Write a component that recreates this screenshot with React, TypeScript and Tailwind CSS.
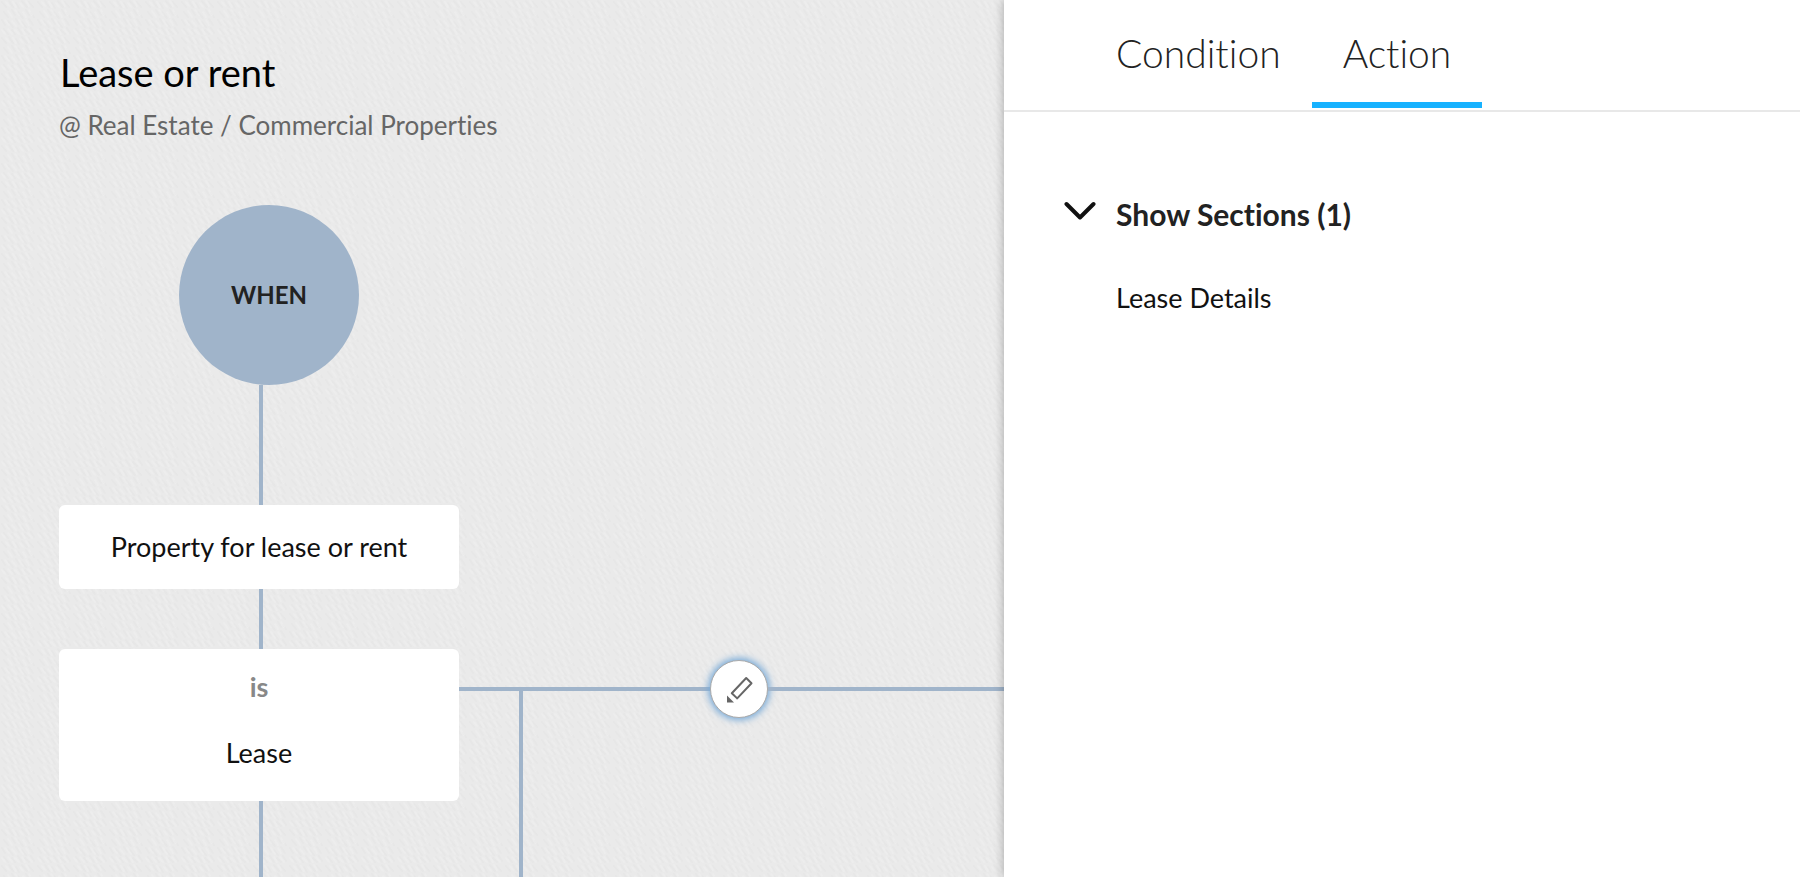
import { useState } from "react";

const TABS = ["Condition", "Action"] as const;
type Tab = (typeof TABS)[number];

const SECTIONS = ["Lease Details"];

function PencilIcon() {
  return (
    <svg width="28" height="28" viewBox="0 0 28 28" fill="none" aria-hidden="true">
      <path
        d="M6.8 18.2L21.2 3L26.5 8.2L12.2 23.4Z"
        stroke="#666"
        strokeWidth="2"
        strokeLinejoin="round"
      />
      <path d="M2 20.5L9 27.5H2Z" fill="#666" />
    </svg>
  );
}

function ChevronIcon({ open }: { open: boolean }) {
  return (
    <svg
      width="32"
      height="20"
      viewBox="0 0 32 20"
      fill="none"
      stroke="#111"
      strokeWidth="4"
      strokeLinecap="round"
      strokeLinejoin="round"
      className={open ? "mb-1.5" : "mb-1.5 -rotate-90"}
      aria-hidden="true"
    >
      <path d="M2.5 3L16 16.5L29.5 3" />
    </svg>
  );
}

// Soft diagonal weave behind the diagram, repeated every 36px
function CanvasTexture() {
  return (
    <svg className="absolute inset-0 w-full h-full" aria-hidden="true">
      <defs>
        <pattern id="weave" width="36" height="36" patternUnits="userSpaceOnUse">
          <g stroke="#e4e4e4" strokeWidth="2" strokeLinecap="round" opacity="0.5">
            <path d="M2 2l4 5M9 1l4 6M16 3l3 5M22 1l5 6M29 2l4 5" />
            <path d="M4 12l4 5M12 10l3 5M18 12l5 6M26 10l3 5M31 13l3 4" />
            <path d="M2 20l3 5M8 21l5 6M16 19l3 5M22 22l4 5M29 19l4 6" />
            <path d="M4 29l4 5M12 30l3 4M18 28l4 6M25 30l4 4M31 28l3 5" />
          </g>
          <g stroke="#f0f0f0" strokeWidth="2" strokeLinecap="round" opacity="0.5">
            <path d="M6 2l3 4M13 2l3 5M20 3l3 4M26 1l3 5" />
            <path d="M8 11l4 6M15 10l4 5M23 12l3 5M29 10l3 5" />
            <path d="M5 20l4 5M12 21l4 5M19 20l4 6M26 20l3 5" />
            <path d="M2 30l3 4M8 29l4 5M15 30l4 4M22 29l3 5M28 29l4 5" />
          </g>
        </pattern>
      </defs>
      <rect width="100%" height="100%" fill="url(#weave)" />
    </svg>
  );
}

function RuleCanvas() {
  return (
    <main className="relative flex-1 min-w-0 flex flex-col bg-[#eaeaea] overflow-hidden">
      <CanvasTexture />
      <div className="relative flex-1 flex flex-col pl-[59px] pt-[49px]">
        <h1 className="text-[38px] leading-[46px] text-black pl-px">Lease or rent</h1>
        <p className="mt-[14px] text-[26px] leading-8 text-[#666]">
          @ Real Estate / Commercial Properties
        </p>

        <div className="mt-16 ml-[120px] size-[180px] rounded-full bg-[#a0b4ca] flex items-center justify-center text-2xl font-bold text-[#222]">
          WHEN
        </div>
        <div className="ml-[200px] w-1 h-[120px] bg-[#a0b4ca]" />
        <div className="w-[400px] h-[84px] rounded-md bg-white flex items-center justify-center text-[27px] text-[#111]">
          Property for lease or rent
        </div>
        <div className="ml-[200px] w-1 h-[60px] bg-[#a0b4ca]" />

        <div className="flex-1 flex">
          <div className="w-[400px] shrink-0 flex flex-col">
            <div className="h-[152px] rounded-md bg-white flex flex-col items-center pt-[18px] gap-[26px] leading-10 text-[27px] text-[#111]">
              <span className="font-bold text-[#888]">is</span>
              <span>Lease</span>
            </div>
            <div className="ml-[200px] w-1 flex-1 bg-[#a0b4ca]" />
          </div>
          <div className="relative flex-1">
            <div className="absolute left-[60px] top-10 bottom-0 w-1 bg-[#a0b4ca]" />
            <div className="relative pt-[11px] flex items-center">
              <div className="w-[251px] h-1 bg-[#a0b4ca]" />
              <button
                type="button"
                aria-label="Edit action"
                className="size-[58px] shrink-0 rounded-full bg-white border border-[#aaa] flex items-center justify-center shadow-[0_0_7px_2px_#76a9d8] cursor-pointer"
              >
                <PencilIcon />
              </button>
              <div className="flex-1 h-1 bg-[#a0b4ca]" />
            </div>
          </div>
        </div>
      </div>
    </main>
  );
}

function DetailsPanel() {
  const [tab, setTab] = useState<Tab>("Action");
  const [open, setOpen] = useState(true);

  return (
    <aside className="relative w-[796px] shrink-0 bg-white shadow-[0_0_10px_rgba(0,0,0,0.3)]">
      <nav className="flex h-28 pl-[81px] border-b-2 border-[#e8e8e8]">
        {TABS.map((t) => (
          <button
            key={t}
            type="button"
            onClick={() => setTab(t)}
            className={`h-[108px] px-[31px] pt-1 text-[39px] font-light text-[#222] border-b-6 cursor-pointer ${
              tab === t ? "border-[#17b2ff]" : "border-transparent"
            }`}
          >
            {t}
          </button>
        ))}
      </nav>

      {tab === "Action" && (
        <section className="pt-[82px] pl-[60px]">
          <button
            type="button"
            aria-expanded={open}
            onClick={() => setOpen(!open)}
            className="flex items-center gap-5 text-[30px] leading-10 font-bold text-[#222] cursor-pointer"
          >
            <ChevronIcon open={open} />
            Show Sections (1)
          </button>
          {open && (
            <ul className="mt-11 pl-[52px] text-[27px] leading-10 text-[#111]">
              {SECTIONS.map((s) => (
                <li key={s}>{s}</li>
              ))}
            </ul>
          )}
        </section>
      )}
    </aside>
  );
}

export default function App() {
  return (
    <div className="min-h-screen flex font-['Lato',sans-serif] [font-variant-ligatures:none]">
      <RuleCanvas />
      <DetailsPanel />
    </div>
  );
}
